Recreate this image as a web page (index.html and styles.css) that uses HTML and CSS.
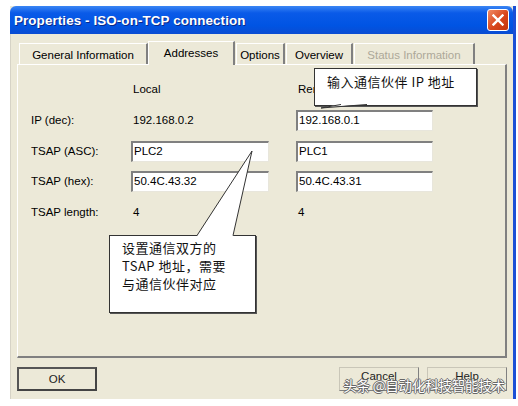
FILE: index.html
```html
<!DOCTYPE html>
<html lang="en">
<head>
    <meta charset="UTF-8">
    <meta name="viewport" content="width=device-width, initial-scale=1.0">
    <title>Properties - ISO-on-TCP connection</title>
    <link rel="stylesheet" href="styles.css">
</head>
<body>
    <div class="window">
        <div class="titlebar">
            <span class="title">Properties - ISO-on-TCP connection</span>
            <span class="close">
                <svg width="12" height="12" viewBox="0 0 12 12">
                    <path d="M1.5 1.5 L10.5 10.5 M10.5 1.5 L1.5 10.5" stroke="#fff" stroke-width="2.4" stroke-linecap="square"/>
                </svg>
            </span>
        </div>
        <div class="body">
            <div class="tabs">
                <div class="tab tab-general">General Information</div>
                <div class="tab tab-addresses active">Addresses</div>
                <div class="tab tab-options">Options</div>
                <div class="tab tab-overview">Overview</div>
                <div class="tab tab-status disabled">Status Information</div>
            </div>
            <div class="panel">
                <div class="form">
                    <div></div>
                    <div class="value">Local</div>
                    <div class="value">Remote</div>

                    <div class="label">IP (dec):</div>
                    <div class="value">192.168.0.2</div>
                    <div class="field">192.168.0.1</div>

                    <div class="label">TSAP (ASC):</div>
                    <div class="field">PLC2</div>
                    <div class="field">PLC1</div>

                    <div class="label">TSAP (hex):</div>
                    <div class="field">50.4C.43.32</div>
                    <div class="field">50.4C.43.31</div>

                    <div class="label">TSAP length:</div>
                    <div class="value">4</div>
                    <div class="value">4</div>
                </div>

                <div class="callout callout-ip">
                    <svg class="tail tail-ip" width="60" height="6" viewBox="0 0 60 6">
                        <polygon points="22,0 48,0 2,4" fill="#fff"/>
                        <polyline points="22,0.5 2,4 48,0.5" fill="none" stroke="#333" stroke-width="1"/>
                    </svg>
                    输入通信伙伴 IP 地址
                </div>

                <div class="callout callout-tsap">
                    <svg class="tail tail-tsap" width="146" height="86" viewBox="0 0 146 86">
                        <polygon points="88,86 143,1 124,86" fill="#fff"/>
                        <polyline points="88,85.5 143,1 124,85.5" fill="none" stroke="#333" stroke-width="1"/>
                    </svg>
                    设置通信双方的<br>
                    TSAP 地址，需要<br>
                    与通信伙伴对应
                </div>
            </div>
            <div class="buttons">
                <button class="btn btn-default">OK</button>
                <div class="spacer"></div>
                <button class="btn btn-raised">Cancel</button>
                <button class="btn btn-raised">Help</button>
            </div>
        </div>
        <div class="watermark">头条 @自动化科技智能技术</div>
    </div>
</body>
</html>
```

FILE: styles.css
```css
body {
    margin: 0;
    background: #fff;
    font-family: 'Liberation Sans', Arial, sans-serif;
    font-size: 11.5px;
    color: #000;
}

.window {
    position: relative;
    margin: 6px 0 0 10px;
    width: 506px;
    height: 393px;
    display: flex;
    flex-direction: column;
    background: #ece9d8;
    border-right: 3px solid #1a4fd6;
    box-sizing: border-box;
}

.titlebar {
    height: 28px;
    display: flex;
    align-items: center;
    justify-content: space-between;
    padding: 0 4px 0 4px;
    background: linear-gradient(#3a86f4, #0a5ae8 25%, #0054e3 70%, #0a4cd2);
    border-radius: 6px 6px 0 0;
}

.title {
    color: #fff;
    font-weight: bold;
    font-size: 13.4px;
    letter-spacing: 0.1px;
    text-shadow: 1px 1px 0 #0a2a8a;
}

.close {
    width: 20px;
    height: 20px;
    display: flex;
    align-items: center;
    justify-content: center;
    border: 1px solid #fff;
    border-radius: 3px;
    background: linear-gradient(135deg, #f08a64, #d8461c 55%, #c2350e);
}

.body {
    flex: 1;
    display: flex;
    flex-direction: column;
    padding: 7px 6px 0 6px;
    border-left: 1px solid #d6d3c6;
}

.tabs {
    display: flex;
    align-items: flex-end;
    height: 23px;
    padding-left: 2px;
}

.tab {
    height: 21px;
    display: flex;
    align-items: center;
    justify-content: center;
    box-sizing: border-box;
    border-top: 1px solid #fff;
    border-left: 1px solid #fff;
    border-right: 2px solid #808080;
    background: #ece9d8;
    margin-right: 1px;
    padding-top: 2px;
}

.tab-general { width: 129px; }
.tab-addresses { width: 87px; }
.tab-options { width: 49px; }
.tab-overview { width: 67px; }
.tab-status { width: 121px; }

.tab.active {
    height: 24px;
    margin-bottom: -1px;
    margin-left: -1px;
    align-items: flex-start;
    padding-top: 5px;
    position: relative;
    z-index: 1;
}

.tab.disabled {
    color: #aca899;
}

.panel {
    position: relative;
    height: 294px;
    box-sizing: border-box;
    border-top: 1px solid #fff;
    border-left: 1px solid #fff;
    border-right: 2px solid #808080;
    border-bottom: 2px solid #808080;
    padding: 9px 0 0 13px;
}

.form {
    display: grid;
    grid-template-columns: 73px 138px 137px;
    grid-template-rows: 30px 32px 30px 30px 31px;
    column-gap: 27px;
    align-items: center;
}

.value {
    padding-left: 2px;
}

.field {
    height: 21px;
    box-sizing: border-box;
    background: #fff;
    border-top: 2px solid #808080;
    border-left: 2px solid #808080;
    border-right: 1px solid #e8e6dc;
    border-bottom: 1px solid #e8e6dc;
    padding: 2px 0 0 1px;
}

.callout {
    position: absolute;
    box-sizing: border-box;
    background: #fff;
    border: 1px solid #333;
    font-family: 'Noto Sans CJK SC', 'Liberation Sans', sans-serif;
    font-size: 13px;
    letter-spacing: 0.5px;
    color: #111;
}

.callout-ip {
    left: 296px;
    top: 3px;
    width: 163px;
    height: 38px;
    padding: 3px 0 0 12px;
    box-shadow: 1px 1px 0 #555;
}

.callout-tsap {
    left: 91px;
    top: 170px;
    width: 147px;
    height: 78px;
    padding: 3px 0 0 12px;
    line-height: 18px;
    box-shadow: 1px 1px 0 #555;
}

.tail {
    position: absolute;
}

.tail-ip {
    left: 4px;
    bottom: -5px;
}

.tail-tsap {
    left: -1px;
    top: -86px;
}

.buttons {
    display: flex;
    gap: 8px;
    margin-top: 9px;
}

.spacer {
    flex: 1;
}

.btn {
    width: 80px;
    height: 24px;
    font-family: 'Liberation Sans', Arial, sans-serif;
    font-size: 11.5px;
    background: #ece9d8;
    border: 1px solid #c9c6b8;
    border-right-color: #808080;
    border-bottom-color: #808080;
    padding: 0;
    color: #222;
}

.btn-raised {
    padding-bottom: 6px;
}

.btn-default {
    border: 2px solid #444;
    border-top-color: #555;
    border-left-color: #555;
}

.watermark {
    position: absolute;
    right: 8px;
    bottom: 4px;
    font-family: 'Noto Sans CJK SC', sans-serif;
    font-size: 13.5px;
    color: #fff;
    letter-spacing: -0.2px;
    text-shadow: 1px 0 0 #666, -1px 0 0 #666, 0 1px 0 #666, 0 -1px 0 #666;
}
```
